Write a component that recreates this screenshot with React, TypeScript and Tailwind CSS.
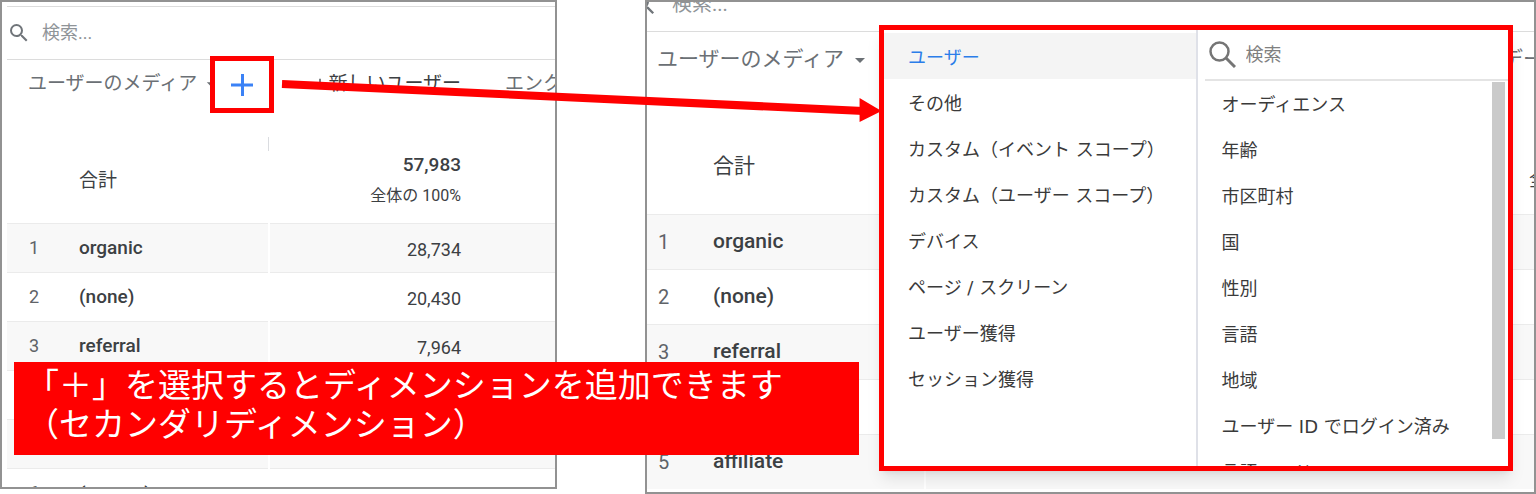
import React from "react";
import clsx from "clsx";
import { MdArrowDropDown, MdArrowDownward, MdSearch } from "react-icons/md";

const channels = [
  { rank: "1", name: "organic", users: "28,734" },
  { rank: "2", name: "(none)", users: "20,430" },
  { rank: "3", name: "referral", users: "7,964" },
  { rank: "", name: "", users: "" },
  { rank: "", name: "", users: "" },
  { rank: "6", name: "(not set)", users: "" },
];

const zoomedChannels = [
  { rank: "1", name: "organic" },
  { rank: "2", name: "(none)" },
  { rank: "3", name: "referral" },
  { rank: "", name: "" },
  { rank: "5", name: "affiliate" },
];

const categories = [
  "ユーザー",
  "その他",
  "カスタム（イベント スコープ）",
  "カスタム（ユーザー スコープ）",
  "デバイス",
  "ページ / スクリーン",
  "ユーザー獲得",
  "セッション獲得",
];

const dimensions = [
  "オーディエンス",
  "年齢",
  "市区町村",
  "国",
  "性別",
  "言語",
  "地域",
  "ユーザー ID でログイン済み",
  "言語コード",
];

const ReportTable = () => (
  <section className="mb-[5px] min-w-0 overflow-hidden border-2 border-[#929292] bg-white pl-[5px]">
    <label className="mt-1 flex h-[54px] items-center gap-[11px] border-y border-[#dcdcdc]">
      <MdSearch className="size-6 shrink-0 text-[#70757a]" />
      <input
        aria-label="検索"
        placeholder="検索..."
        className="min-w-0 flex-1 text-lg outline-none placeholder:text-[#8f9498]"
      />
    </label>
    <table className="w-full table-fixed text-left whitespace-nowrap text-[#3c4043]">
      <colgroup>
        <col className="w-[72px]" />
        <col className="w-[190px]" />
        <col className="w-[192px]" />
        <col />
      </colgroup>
      <thead>
        <tr className="h-12 text-[19px] text-[#6b7075]">
          <th colSpan={2} className="relative p-0 font-normal">
            <button type="button" className="flex items-center gap-1 pl-[21px]">
              ユーザーのメディア
              <MdArrowDropDown className="size-5" />
            </button>
            <button
              type="button"
              aria-label="ディメンションを追加"
              className="absolute -top-1 left-[203px] flex h-[57px] w-16 items-center justify-center border-[5px] border-[#ff0000]"
            >
              <svg viewBox="0 0 22 22" className="size-[22px]">
                <path d="M11.5 0v22M0 11h22" stroke="#3b82f6" strokeWidth="3" />
              </svg>
            </button>
          </th>
          <th className="p-0 font-normal text-[#3c4043]">
            <span className="flex items-center justify-end">
              <MdArrowDownward className="size-4" />
              新しいユーザー
            </span>
          </th>
          <th className="overflow-hidden p-0 pl-11 font-normal">エンク</th>
        </tr>
      </thead>
      <tbody>
        <tr className="h-[115px]">
          <td className="p-0" />
          <td className="relative p-0 pt-8 text-[19px]">
            合計
            <span className="absolute top-[29px] right-0 h-[14px] w-px bg-[#dadce0]" />
          </td>
          <td className="p-0 pt-[30px] text-right">
            <div className="text-[19px] leading-[31px] font-medium">57,983</div>
            <div className="text-base leading-[31px]">全体の 100%</div>
          </td>
          <td />
        </tr>
        {channels.map((channel, i) => (
          <tr
            key={i}
            className={clsx(
              "h-[49px] border-t border-[#ebebeb]",
              i % 2 === 0 && "bg-[#f8f8f8]"
            )}
          >
            <td className="p-0 pl-[22px] text-lg text-[#5f6368]">
              {channel.rank}
            </td>
            <td className="border-r-2 border-white p-0 pt-0.5 text-[19px] font-medium">
              {channel.name}
            </td>
            <td className="p-0 pt-1 text-right text-lg">{channel.users}</td>
            <td />
          </tr>
        ))}
      </tbody>
    </table>
  </section>
);

const DimensionPicker = () => (
  <div className="absolute top-[23px] right-[21px] left-[232px] grid h-[446px] grid-cols-[313fr_310fr] overflow-hidden border-[5px] border-[#ff0000] bg-white font-['DejaVu_Sans','Noto_Sans_CJK_JP',sans-serif] text-lg text-[#3a3a3a] shadow-lg">
    <ul className="min-w-0 border-r-2 border-[#dfe1e8] pt-[3px]">
      {categories.map((category, i) => (
        <li key={category}>
          <button
            type="button"
            className={clsx(
              "flex h-[46px] w-full items-center pt-1 pl-6 whitespace-nowrap",
              i === 0 && "bg-[#f4f4f4] text-[#2b7de9]"
            )}
          >
            {category}
          </button>
        </li>
      ))}
    </ul>
    <div className="min-w-0 pl-[7px]">
      <label className="flex h-[51px] items-center gap-[10px] border-b-2 border-[#e4e4e4] pl-1">
        <svg viewBox="0 0 27 27" className="size-[27px] shrink-0" fill="none">
          <circle cx="10.5" cy="10.5" r="9" stroke="#757575" strokeWidth="2.5" />
          <path d="M17 17l9 9" stroke="#757575" strokeWidth="3" />
        </svg>
        <input
          aria-label="ディメンションを検索"
          placeholder="検索"
          className="min-w-0 flex-1 outline-none placeholder:text-[#808080]"
        />
      </label>
      <div className="flex items-start justify-between pr-[3px]">
        <ul className="pl-[17px] whitespace-nowrap">
          {dimensions.map((dimension) => (
            <li key={dimension}>
              <button type="button" className="flex h-[46px] items-center pt-0.5">
                {dimension}
              </button>
            </li>
          ))}
        </ul>
        <div className="mt-px h-[357px] w-[13px] bg-[#cacaca]" />
      </div>
    </div>
  </div>
);

const ReportWithPicker = () => (
  <section className="relative min-w-0 border-2 border-[#929292] bg-white">
    <div className="h-full overflow-hidden">
      <div className="flex h-[30px] items-start border-b border-[#dcdcdc]">
        <label className="-mt-[13px] -ml-4 flex items-center gap-[14px]">
          <MdSearch className="size-[27px] shrink-0 text-[#70757a]" />
          <input
            aria-label="検索"
            placeholder="検索..."
            className="h-[30px] min-w-0 text-xl outline-none placeholder:text-[#8f9498]"
          />
        </label>
      </div>
      <table className="w-full table-fixed text-left whitespace-nowrap text-[#3c4043]">
        <colgroup>
          <col className="w-[66px]" />
          <col className="w-[212px]" />
          <col />
          <col className="w-8" />
        </colgroup>
        <thead>
          <tr className="h-[55px] text-[21px] text-[#6b7075]">
            <th colSpan={2} className="p-0 font-normal">
              <button type="button" className="flex items-center gap-1 pl-[10px]">
                ユーザーのメディア
                <MdArrowDropDown className="size-6" />
              </button>
            </th>
            <th />
            <th className="p-0 font-normal">デー</th>
          </tr>
        </thead>
        <tbody>
          <tr className="h-[127px]">
            <td className="p-0" />
            <td className="p-0 pt-8 text-[21px]">合計</td>
            <td />
            <td className="p-0 pt-[60px] pl-[27px] text-lg">全</td>
          </tr>
          {zoomedChannels.map((channel, i) => (
            <tr
              key={i}
              className={clsx(
                "h-[55px] border-t border-[#ebebeb]",
                i % 2 === 0 && "bg-[#f8f8f8]"
              )}
            >
              <td className="p-0 pl-[11px] text-xl text-[#5f6368]">
                {channel.rank}
              </td>
              <td className="border-r-2 border-white p-0 text-[21px] font-medium">
                {channel.name}
              </td>
              <td />
              <td />
            </tr>
          ))}
        </tbody>
      </table>
    </div>
    <DimensionPicker />
  </section>
);

const App = () => {
  return (
    <main
      lang="ja"
      className="relative grid h-screen grid-cols-[557fr_891fr] grid-rows-[100%] gap-[88px] overflow-hidden bg-white font-['Roboto','Noto_Sans_CJK_JP',sans-serif]"
    >
      <ReportTable />
      <ReportWithPicker />

      {/* arrow from the plus button to the picker */}
      <svg
        viewBox="0 0 600 46"
        preserveAspectRatio="none"
        className="absolute top-[78px] left-[18.3%] h-[46px] w-[39.1%]"
      >
        <path d="M1 6L582 33" stroke="#ff0000" strokeWidth="8" />
        <path d="M578 20v24l22-11z" fill="#ff0000" />
      </svg>

      <p className="absolute top-[362px] left-[14px] h-[93px] w-[55%] bg-[#ff0000] pt-1 pl-3 text-[33px] leading-[39px] whitespace-nowrap text-white">
        「＋」を選択するとディメンションを追加できます
        <br />
        （セカンダリディメンション）
      </p>
    </main>
  );
};

export default App;
